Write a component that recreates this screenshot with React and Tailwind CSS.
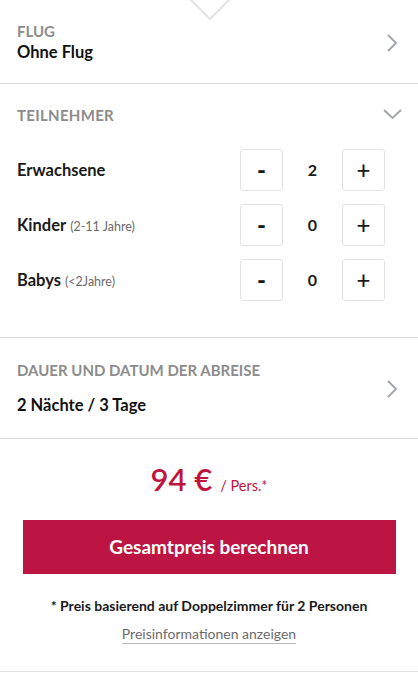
const font = { fontFamily: 'Lato, "Liberation Sans", sans-serif' };

function ChevronRight() {
  return (
    <svg width="12" height="20" viewBox="0 0 12 20" className="shrink-0">
      <path d="M2 2 L10 10 L2 18" fill="none" stroke="#a3a7ad" strokeWidth="2" />
    </svg>
  );
}

function ChevronDown() {
  return (
    <svg width="20" height="12" viewBox="0 0 20 12" className="shrink-0">
      <path d="M1 1 L9.5 9 L18 1" fill="none" stroke="#a3a7ad" strokeWidth="2" />
    </svg>
  );
}

function Counter({ label, hint, value }) {
  return (
    <div className="flex h-[42px] items-center">
      <div className="flex-1 text-[16.5px] font-bold text-[#1a1a1a]">
        {label}
        {hint && <span className="ml-1 text-[12.5px] font-normal text-[#6b6b6b]">{hint}</span>}
      </div>
      <button className="flex h-[42px] w-[43px] items-center justify-center rounded-[3px] border border-[#e2e2e2] text-[24px] font-black leading-none text-[#1a1a1a]">
        -
      </button>
      <div className="w-[59px] text-center text-[16px] font-bold text-[#1a1a1a]">{value}</div>
      <button className="flex h-[42px] w-[43px] items-center justify-center rounded-[3px] border border-[#e2e2e2] text-[24px] font-medium leading-none text-[#1a1a1a]">
        +
      </button>
    </div>
  );
}

export default function App() {
  return (
    <div className="relative h-[673px] w-[418px] overflow-hidden bg-white" style={font}>
      <svg width="42" height="22" viewBox="0 0 42 22" className="absolute left-[189px] top-0">
        <path d="M1 -1 L21 19 L41 -1" fill="none" stroke="#e3e3e3" strokeWidth="2" />
      </svg>

      <div className="flex items-center border-b border-[#dcdcdc] pb-[21px] pl-[17px] pr-[20px] pt-[23px]">
        <div className="flex-1">
          <div className="text-[15px] font-bold uppercase leading-[16px] text-[#8c8c8c]">Flug</div>
          <div className="mt-[3px] text-[16.5px] font-bold leading-[20px] text-[#111]">Ohne Flug</div>
        </div>
        <ChevronRight />
      </div>

      <div className="border-b border-[#dcdcdc] pb-[36px] pl-[17px] pr-[33px] pt-[23px]">
        <div className="flex items-center">
          <div className="flex-1 text-[15px] font-bold uppercase leading-[16px] tracking-[0.3px] text-[#8c8c8c]">
            Teilnehmer
          </div>
          <div className="-mr-[18px]">
            <ChevronDown />
          </div>
        </div>
        <div className="mt-[26px] flex flex-col gap-[13px]">
          <Counter label="Erwachsene" value="2" />
          <Counter label="Kinder" hint="(2-11 Jahre)" value="0" />
          <Counter label="Babys" hint="(<2Jahre)" value="0" />
        </div>
      </div>

      <div className="flex items-center border-b border-[#dcdcdc] pb-[23px] pl-[17px] pr-[20px] pt-[24px]">
        <div className="flex-1">
          <div className="text-[15px] font-bold uppercase leading-[16px] text-[#8c8c8c]">
            Dauer und Datum der Abreise
          </div>
          <div className="mt-[17px] text-[16.5px] font-bold leading-[20px] text-[#111]">2 Nächte / 3 Tage</div>
        </div>
        <ChevronRight />
      </div>

      <div className="flex flex-col items-center border-b border-[#e3e3e3] pb-[27px] pt-[20px]">
        <div className="flex items-baseline text-[#c0143f]">
          <span className="text-[31px] font-semibold leading-[40px]">94 €</span>
          <span className="ml-2 text-[14.5px]">/ Pers.*</span>
        </div>
        <button className="mt-[21px] flex h-[54px] w-[373px] items-center justify-center bg-[#bd1543] text-[19px] font-bold text-white">
          Gesamtpreis berechnen
        </button>
        <div className="mt-[23px] text-[14px] font-bold leading-[18px] text-[#1a1a1a]">
          * Preis basierend auf Doppelzimmer für 2 Personen
        </div>
        <div className="mt-[10px] border-b border-[#bdbdbd] text-[14px] leading-[18px] text-[#6b6b6b]">
          Preisinformationen anzeigen
        </div>
      </div>
    </div>
  );
}
